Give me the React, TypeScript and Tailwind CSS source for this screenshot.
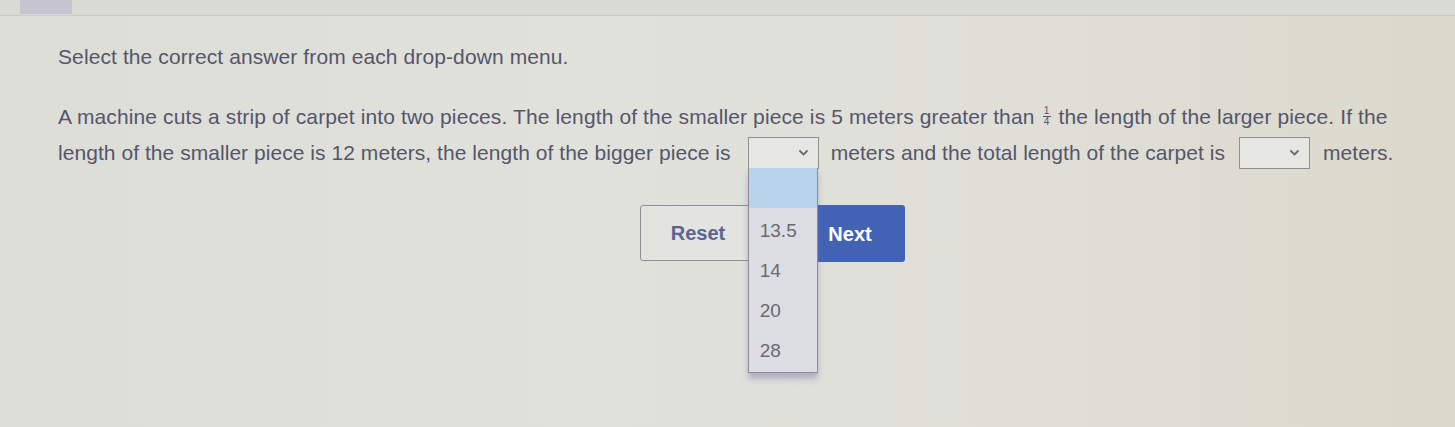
import React from "react";

const font = { fontFamily: '"Liberation Sans", Arial, sans-serif' };

function Chevron() {
  return (
    <svg width="9" height="6" viewBox="0 0 9 6" className="shrink-0">
      <path d="M1 1 L4.5 4.5 L8 1" fill="none" stroke="#6b6b72" strokeWidth="1.8" strokeLinecap="round" strokeLinejoin="round" />
    </svg>
  );
}

function Select({ open = false, gap }: { open?: boolean; gap: string }) {
  const options = ["13.5", "14", "20", "28"];
  return (
    <span className={`relative inline-block align-middle ${gap}`}>
      <span className="flex h-[32px] w-[71px] items-center justify-end border border-[#8d8d92] bg-[#e6e7e2] pr-[10px]">
        <Chevron />
      </span>
      {open && (
        <div className="absolute left-0 top-[31px] z-10 w-[70px] border-x border-b border-[#8b8b96] bg-[#dcdce3] pt-[3px] pb-[1px] shadow-[0_6px_6px_rgba(120,120,170,0.45)]">
          <div className="-mt-[3px] mb-[3px] h-[40px] bg-[#b9d3ea]" />
          {options.map((o) => (
            <div key={o} className="flex h-[40px] items-center pl-[11px] text-[19px] text-[#6a6a72]">
              {o}
            </div>
          ))}
        </div>
      )}
    </span>
  );
}

function Fraction() {
  return (
    <span className="mx-[8px] inline-flex flex-col items-center align-middle text-[10px] leading-[10px] text-[#55566a] relative -top-[2px]">
      <span>1</span>
      <span className="h-px w-[8px] bg-[#55566a]" />
      <span>4</span>
    </span>
  );
}

export default function App() {
  return (
    <div
      className="relative h-[427px] w-[1455px] overflow-hidden bg-[linear-gradient(90deg,#dcddd6_0%,#e1e1db_40%,#dfdfd8_70%,#dcd8cb_100%)] text-[#55566a]"
      style={font}
    >
      {/* top strip */}
      <div className="flex h-[16px] items-start border-b border-[#cacbc4] bg-[#d9dad4] pl-[20px]">
        <div className="h-[14px] w-[52px] bg-[#c5c4d0]" />
      </div>

      <div className="pl-[58px] pr-[20px]">
        <p className="mt-[29px] text-[21px] leading-[24px] tracking-[0.1px]">
          Select the correct answer from each drop-down menu.
        </p>

        <div className="mt-[30px] text-[21px] leading-[36px] whitespace-nowrap">
          <div className="tracking-[0.12px]">
            A machine cuts a strip of carpet into two pieces. The length of the smaller piece is 5 meters greater than
            <Fraction />
            the length of the larger piece. If the
          </div>
          <div className="flex items-center tracking-[0.05px]">
            <span>length of the smaller piece is 12 meters, the length of the bigger piece is</span>
            <Select open gap="ml-[17px] mr-[12px]" />
            <span>meters and the total length of the carpet is</span>
            <Select gap="ml-[14px] mr-[13px]" />
            <span>meters.</span>
          </div>
        </div>

        <div className="mt-[34px] ml-[582px] flex gap-[35px]">
          <button className="h-[56px] w-[120px] rounded-[3px] border border-[#8f8f96] bg-[#e3e3df] pr-[4px] text-[20px] font-bold text-[#5a6594]">
            Reset
          </button>
          <button className="h-[57px] w-[110px] rounded-[3px] bg-[#4262b4] text-[20px] font-bold text-white">
            Next
          </button>
        </div>
      </div>
    </div>
  );
}
